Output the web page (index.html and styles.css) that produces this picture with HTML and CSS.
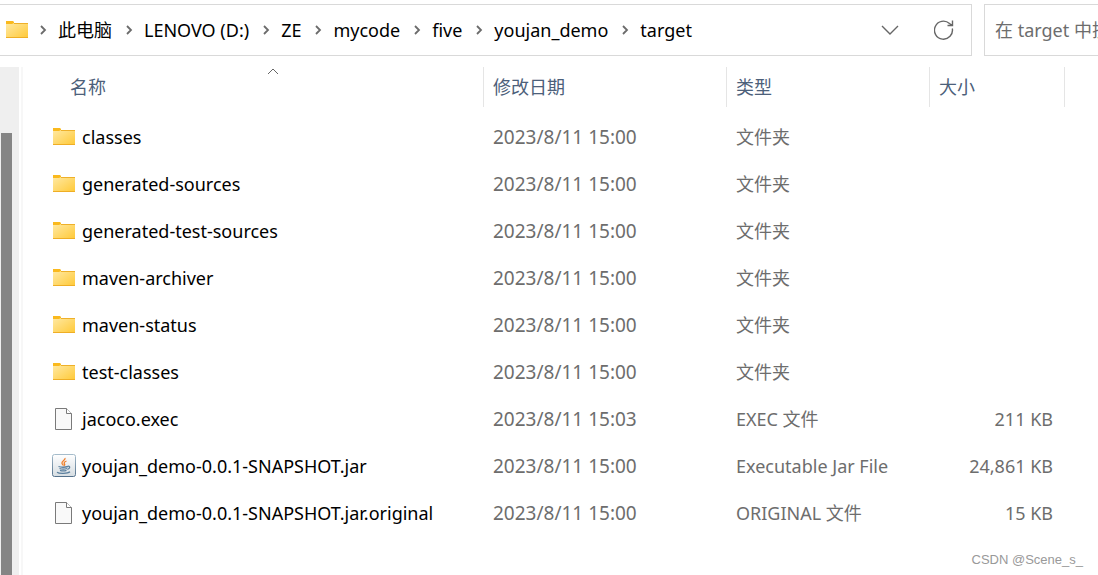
FILE: index.html
```html
<!DOCTYPE html>
<html lang="zh-CN">
<head>
  <title>target</title>
  <meta charset="utf-8">
  <link rel="stylesheet" href="styles.css">
</head>
<body>
  <svg class="defs" width="0" height="0" aria-hidden="true">
    <defs>
      <linearGradient id="folder-fill" x1="0" y1="0" x2="1" y2="1">
        <stop offset="0" stop-color="#ffe9a3"/>
        <stop offset="1" stop-color="#ffc937"/>
      </linearGradient>
      <linearGradient id="jar-fill" x1="0" y1="0" x2="0" y2="1">
        <stop offset="0" stop-color="#ffffff"/>
        <stop offset="1" stop-color="#d6dde2"/>
      </linearGradient>
      <linearGradient id="jar-edge" x1="0" y1="0" x2="0" y2="1">
        <stop offset="0" stop-color="#a5bccb"/>
        <stop offset="1" stop-color="#54718c"/>
      </linearGradient>
    </defs>
    <symbol id="folder" viewBox="0 1 24 24">
      <path d="M1 4h7l1 1v4H1z" fill="#fab91d"/>
      <path d="M1 7h6l2-1h14v15H1z" fill="url(#folder-fill)"/>
      <path d="M9 6.5h14" stroke="#eeb02a"/>
      <path d="M1 20.5h22" stroke="#efae25"/>
    </symbol>
    <symbol id="file" viewBox="0 0 24 24">
      <path d="M3.500 1.500h11l5 5v16h-16z" fill="#f9f9f9" stroke="#7a7a7a"/>
      <path d="M14.500 1.500v5h5" fill="#fff" stroke="#7a7a7a"/>
    </symbol>
    <symbol id="jar" viewBox="0 0 24 24">
      <rect x="0.500" y="0.500" width="23" height="22" rx="2" fill="url(#jar-fill)" stroke="url(#jar-edge)"/>
      <path d="M13 4c1 2-4 3-3 5.500.3.800 1 1.200 1.500 2M14.500 7c-2 .8-3 1.800-2 3 .5.600.2 1.200-.3 1.700" fill="none" stroke="#ee7f2b" stroke-width="1.300"/>
      <path d="M6.500 12.500c2 .7 7 .7 9.500 0M7.500 14.500c2 .6 5.500.6 7.500 0M8 16.300c2 .7 4.500.7 6.500 0M16 12.300c2.500-.6 2.200 2.400-.7 3M5 18.300c2 1.500 10.500 1.500 13-.5" fill="none" stroke="#5a7f9e" stroke-width="1.300"/>
    </symbol>
    <symbol id="chevron" viewBox="0 0 8 10">
      <path d="M2 1 6 5 2 9" fill="none" stroke="#6b6b6b" stroke-width="1.800"/>
    </symbol>
  </svg>

  <header class="toolbar">
    <nav class="address">
      <svg class="icon"><use href="#folder"/></svg>
      <ol class="crumbs">
        <li><svg class="chevron"><use href="#chevron"/></svg><a href="#">此电脑</a></li>
        <li><svg class="chevron"><use href="#chevron"/></svg><a href="#">LENOVO (D:)</a></li>
        <li><svg class="chevron"><use href="#chevron"/></svg><a href="#">ZE</a></li>
        <li><svg class="chevron"><use href="#chevron"/></svg><a href="#">mycode</a></li>
        <li><svg class="chevron"><use href="#chevron"/></svg><a href="#">five</a></li>
        <li><svg class="chevron"><use href="#chevron"/></svg><a href="#">youjan_demo</a></li>
        <li><svg class="chevron"><use href="#chevron"/></svg><a href="#">target</a></li>
      </ol>
      <button class="tool" type="button" aria-label="历史记录">
        <svg width="18" height="10" viewBox="0 0 18 10"><path d="M1 1l8 8 8-8" fill="none" stroke="#666" stroke-width="1.400"/></svg>
      </button>
      <button class="tool" type="button" aria-label="刷新">
        <svg width="20" height="20" viewBox="0 0 20 20"><path d="M18.300 8.500A9 9 0 1 1 15.500 3.500L18.500 5.500M18.500 .5v5h-5" fill="none" stroke="#666" stroke-width="1.400"/></svg>
      </button>
    </nav>
    <input class="search" type="text" placeholder="在 target 中搜索" aria-label="搜索">
  </header>

  <main class="content">
    <div class="scrollbar"><div class="thumb"></div></div>
    <table class="files">
      <colgroup>
        <col class="col-name">
        <col class="col-date">
        <col class="col-type">
        <col class="col-size">
        <col>
      </colgroup>
      <thead>
        <tr>
          <th class="name">名称<svg class="sort" width="12" height="7" viewBox="0 0 12 7"><path d="M1 6l5-5 5 5" fill="none" stroke="#666"/></svg></th>
          <th>修改日期</th>
          <th>类型</th>
          <th>大小</th>
          <td></td>
        </tr>
      </thead>
      <tbody>
        <tr>
          <td class="name"><a href="#"><svg class="icon"><use href="#folder"/></svg>classes</a></td>
          <td class="date">2023/8/11 15:00</td>
          <td>文件夹</td>
          <td class="size"></td>
        </tr>
        <tr>
          <td class="name"><a href="#"><svg class="icon"><use href="#folder"/></svg>generated-sources</a></td>
          <td class="date">2023/8/11 15:00</td>
          <td>文件夹</td>
          <td class="size"></td>
        </tr>
        <tr>
          <td class="name"><a href="#"><svg class="icon"><use href="#folder"/></svg>generated-test-sources</a></td>
          <td class="date">2023/8/11 15:00</td>
          <td>文件夹</td>
          <td class="size"></td>
        </tr>
        <tr>
          <td class="name"><a href="#"><svg class="icon"><use href="#folder"/></svg>maven-archiver</a></td>
          <td class="date">2023/8/11 15:00</td>
          <td>文件夹</td>
          <td class="size"></td>
        </tr>
        <tr>
          <td class="name"><a href="#"><svg class="icon"><use href="#folder"/></svg>maven-status</a></td>
          <td class="date">2023/8/11 15:00</td>
          <td>文件夹</td>
          <td class="size"></td>
        </tr>
        <tr>
          <td class="name"><a href="#"><svg class="icon"><use href="#folder"/></svg>test-classes</a></td>
          <td class="date">2023/8/11 15:00</td>
          <td>文件夹</td>
          <td class="size"></td>
        </tr>
        <tr>
          <td class="name"><a href="#"><svg class="icon"><use href="#file"/></svg>jacoco.exec</a></td>
          <td class="date">2023/8/11 15:03</td>
          <td>EXEC 文件</td>
          <td class="size">211 KB</td>
        </tr>
        <tr>
          <td class="name"><a href="#"><svg class="icon"><use href="#jar"/></svg>youjan_demo-0.0.1-SNAPSHOT.jar</a></td>
          <td class="date">2023/8/11 15:00</td>
          <td>Executable Jar File</td>
          <td class="size">24,861 KB</td>
        </tr>
        <tr>
          <td class="name"><a href="#"><svg class="icon"><use href="#file"/></svg>youjan_demo-0.0.1-SNAPSHOT.jar.original</a></td>
          <td class="date">2023/8/11 15:00</td>
          <td>ORIGINAL 文件</td>
          <td class="size">15 KB</td>
        </tr>
      </tbody>
    </table>
  </main>

  <div class="watermark">CSDN @Scene_s_</div>
</body>
</html>
```
FILE: styles.css
```css
* {
  box-sizing: border-box;
}
body {
  display: flex;
  flex-direction: column;
  height: 100vh;
  margin: 0;
  overflow: hidden;
  background: #fff;
  color: #000;
  font-family: 'Noto Sans', 'Noto Sans CJK SC', sans-serif;
  font-size: 18px;
  line-height: 24px;
}
a {
  color: inherit;
  text-decoration: none;
}
.defs {
  position: absolute;
}
.icon {
  flex: none;
  width: 24px;
  height: 24px;
}

.toolbar {
  display: flex;
  gap: 12px;
  padding-top: 4px;
}
.address {
  display: flex;
  flex: 1;
  align-items: center;
  height: 52px;
  padding: 0 11px 0 5px;
  border: 1px solid #d9d9d9;
  border-left: 0;
}
.crumbs {
  display: flex;
  flex: 1;
  gap: 3px;
  margin: 0;
  padding: 0;
  list-style: none;
  white-space: nowrap;
}
.crumbs li {
  display: flex;
  align-items: center;
}
.chevron {
  width: 8px;
  height: 10px;
  margin: 0 11px 0 10px;
}
.tool {
  display: flex;
  align-items: center;
  justify-content: center;
  width: 32px;
  height: 32px;
  margin-left: 22px;
  padding: 0;
  border: 0;
  background: none;
}
.search {
  width: 114px;
  height: 52px;
  padding: 0 0 0 10px;
  border: 1px solid #d9d9d9;
  border-right: 0;
  font: inherit;
}
.search::placeholder {
  color: #6d6d6d;
}

.content {
  display: flex;
  flex: 1;
  align-items: flex-start;
  margin-top: 11px;
}
.scrollbar {
  align-self: stretch;
  width: 23px;
  padding: 66px 0 0 1px;
  border-right: 2px solid #f7f7f7;
  background: linear-gradient(to right, #efefef 19px, #fff 19px);
}
.thumb {
  width: 11px;
  height: 100%;
  background: #858585;
}
.files {
  flex: 1;
  table-layout: fixed;
  border-collapse: separate;
  border-spacing: 0;
  color: #6d6d6d;
  white-space: nowrap;
}
.col-name {
  width: 461px;
}
.col-date {
  width: 243px;
}
.col-type {
  width: 203px;
}
.col-size {
  width: 135px;
}
th {
  height: 40px;
  padding: 0 9px;
  border-right: 1px solid #e5e5e5;
  color: #4c607a;
  font-weight: normal;
  text-align: left;
}
th.name {
  position: relative;
  padding-left: 47px;
}
.sort {
  position: absolute;
  top: 1px;
  left: 244px;
}
tbody td {
  height: 47px;
  padding: 0 9px;
}
tbody::before {
  content: "";
  display: block;
  height: 6px;
}
td.name {
  padding-left: 29px;
  color: #000;
}
td.name a {
  display: flex;
  align-items: center;
  gap: 6px;
}
td.date {
  font-size: 19px;
}
td.size {
  padding-right: 12px;
  text-align: right;
}

.watermark {
  position: absolute;
  right: 15px;
  bottom: 5px;
  color: #999;
  font-family: 'Liberation Sans', sans-serif;
  font-size: 13px;
  line-height: 20px;
}
```
